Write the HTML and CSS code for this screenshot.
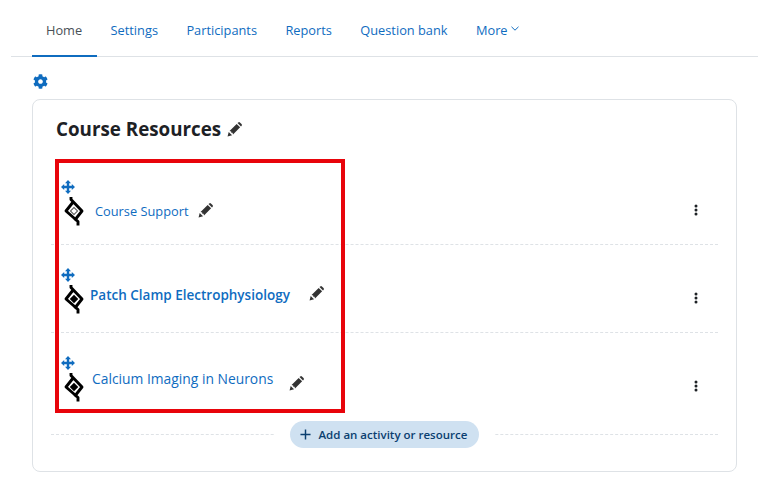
FILE: index.html
```html
<!DOCTYPE html>
<html lang="en">
<head>
<meta charset="utf-8">
<title>Course Resources</title>
<link rel="stylesheet" href="styles.css">
</head>
<body>
<svg class="defs" width="0" height="0" aria-hidden="true">
  <defs>
    <symbol id="pencil" viewBox="0 0 16 16">
      <path d="M0.6 15.4 1.8 10.6 5.4 14.2Z"/>
      <path d="M2.7 9.6 10.3 2 14 5.7 6.4 13.3 5.9 11.5 4.500 11.500 4.500 10.100Z"/>
      <path d="M11.200 1.100 12 .4Q13 -.2 13.800 .5L15.500 2.200Q16.200 3 15.600 4L14.900 4.800Z"/>
    </symbol>
    <symbol id="move" viewBox="0 0 14 14">
      <path d="M7 0 10 3.200H8.200V5.800H10.800V4L14 7 10.800 10V8.200H8.200V10.800H10L7 14 4 10.800H5.800V8.200H3.200V10L0 7 3.200 4V5.800H5.800V3.200H4Z"/>
    </symbol>
    <symbol id="strand" viewBox="0 0 20 30">
      <path d="M7 1V3.500L18 15 10.500 24.500M14 29.500V25.500L2 15 9.500 5.500" fill="none" stroke="#000" stroke-width="2.900" stroke-linejoin="round"/>
    </symbol>
    <symbol id="kebab" viewBox="0 0 4 12">
      <circle cx="2" cy="2" r="1.500"/>
      <circle cx="2" cy="6" r="1.500"/>
      <circle cx="2" cy="10" r="1.500"/>
    </symbol>
  </defs>
</svg>

<nav class="tabs">
  <a class="tab tab-active" href="#">Home</a>
  <a class="tab" href="#">Settings</a>
  <a class="tab" href="#">Participants</a>
  <a class="tab" href="#">Reports</a>
  <a class="tab" href="#">Question bank</a>
  <a class="tab" href="#">More
    <svg class="chevron" viewBox="0 0 8 5" width="8" height="5"><path d="M.5.800 4 4.200 7.500.800" fill="none" stroke="currentColor"/></svg>
  </a>
</nav>

<main class="page">
  <svg class="gear" viewBox="0 0 512 512" width="15" height="15"><path d="M487.400 315.700l-42.600-24.600c4.300-23.200 4.300-47 0-70.200l42.600-24.600c4.900-2.800 7.100-8.600 5.500-14-11.100-35.600-30-67.800-54.700-94.600-3.800-4.100-10-5.100-14.800-2.300L380.800 110c-17.900-15.400-38.500-27.300-60.800-35.100V25.800c0-5.600-3.900-10.500-9.400-11.700-36.700-8.200-74.300-7.800-109.200 0-5.500 1.200-9.400 6.100-9.400 11.700V75c-22.200 7.900-42.800 19.800-60.800 35.100L88.700 85.500c-4.900-2.800-11-1.900-14.800 2.300-24.700 26.700-43.600 58.900-54.700 94.600-1.700 5.400.6 11.200 5.500 14L67.300 221c-4.300 23.200-4.300 47 0 70.200l-42.600 24.600c-4.900 2.800-7.100 8.600-5.500 14 11.100 35.600 30 67.800 54.700 94.600 3.800 4.100 10 5.100 14.800 2.300l42.600-24.600c17.900 15.400 38.500 27.300 60.800 35.100v49.200c0 5.600 3.900 10.500 9.400 11.700 36.700 8.200 74.300 7.800 109.200 0 5.500-1.200 9.400-6.100 9.400-11.700v-49.200c22.200-7.900 42.800-19.800 60.800-35.100l42.600 24.600c4.900 2.800 11 1.900 14.800-2.300 24.700-26.700 43.600-58.900 54.700-94.600 1.500-5.500-.7-11.300-5.600-14.100zM256 336c-44.100 0-80-35.900-80-80s35.900-80 80-80 80 35.900 80 80-35.900 80-80 80z"/></svg>

  <section class="card">
    <h2 class="section-title">Course Resources
      <svg class="pencil pencil-title" width="15" height="15"><use href="#pencil"/></svg>
    </h2>

    <ul class="activities">
      <li class="activity activity-one">
        <div class="activity-main">
          <svg class="move" width="14" height="14"><use href="#move"/></svg>
          <div class="activity-line">
            <span class="strand-wrap">
              <svg class="strand" width="20" height="30"><use href="#strand"/></svg>
              <span class="strand-core strand-core-hollow"></span>
            </span>
            <a class="activity-link" href="#">Course Support</a>
            <svg class="pencil" width="15" height="15"><use href="#pencil"/></svg>
          </div>
        </div>
        <svg class="kebab" width="4" height="12"><use href="#kebab"/></svg>
      </li>
      <li class="activity activity-two">
        <div class="activity-main">
          <svg class="move" width="14" height="14"><use href="#move"/></svg>
          <div class="activity-line">
            <span class="strand-wrap">
              <svg class="strand" width="20" height="30"><use href="#strand"/></svg>
              <span class="strand-core"></span>
            </span>
            <a class="activity-link" href="#">Patch Clamp Electrophysiology</a>
            <svg class="pencil" width="15" height="15"><use href="#pencil"/></svg>
          </div>
        </div>
        <svg class="kebab" width="4" height="12"><use href="#kebab"/></svg>
      </li>
      <li class="activity activity-three">
        <div class="activity-main">
          <svg class="move" width="14" height="14"><use href="#move"/></svg>
          <div class="activity-line">
            <span class="strand-wrap">
              <svg class="strand" width="20" height="30"><use href="#strand"/></svg>
              <span class="strand-core"></span>
            </span>
            <a class="activity-link" href="#">Calcium Imaging in Neurons</a>
            <svg class="pencil" width="15" height="15"><use href="#pencil"/></svg>
          </div>
        </div>
        <svg class="kebab" width="4" height="12"><use href="#kebab"/></svg>
      </li>
    </ul>

    <div class="add-row">
      <button class="add-button" type="button">
        <svg class="plus" viewBox="0 0 12 12" width="11" height="11"><path d="M6 .5V11.500M.5 6H11.500" fill="none" stroke="currentColor" stroke-width="1.600"/></svg>
        Add an activity or resource
      </button>
    </div>

    <div class="highlight" aria-hidden="true"></div>
  </section>
</main>
</body>
</html>
```
FILE: styles.css
```css
* { box-sizing: border-box; }

html, body { margin: 0; padding: 0; }

body {
  width: 775px;
  height: 484px;
  overflow: hidden;
  background: #fff;
  color: #1d2125;
  font-family: "Open Sans", "Noto Sans", sans-serif;
  font-size: 12.8px;
}

.defs { position: absolute; }

a { color: #0f6cbf; text-decoration: none; }

.tabs {
  display: flex;
  height: 57px;
  margin: 0 17px 0 11px;
  padding-left: 20.8px;
  border-bottom: 1px solid #dee2e6;
}

.tab {
  display: flex;
  align-items: center;
  gap: 3px;
  height: 57px;
  padding: 2px 14.2px 0;
  white-space: nowrap;
}

.tab-active {
  color: #495057;
  padding: 4px 14.8px 0 14.2px;
  margin-right: -0.6px;
  border-bottom: 2px solid #0f6cbf;
}

.chevron { margin-bottom: 3px; }

.page {
  padding: 17px 38px 0 32px;
}

.gear {
  display: block;
  fill: #0f6cbf;
  margin-left: 1px;
  height: 15px;
}

.card {
  position: relative;
  height: 373px;
  margin-top: 10px;
  padding: 15px 18px 0;
  border: 1px solid #dee2e6;
  border-radius: 8px;
}

.section-title {
  display: flex;
  align-items: center;
  gap: 6px;
  margin: 0 0 0 5px;
  height: 28px;
  font-size: 18.800px;
  font-weight: 700;
  color: #1d2125;
}

.pencil { fill: #333; flex: none; }
.pencil-title { margin-top: 1px; }

.activities {
  list-style: none;
  margin: 14px 0 0;
  padding: 0;
}

.activity {
  display: flex;
  justify-content: space-between;
  height: 88px;
  border-bottom: 1px dashed #dee2e6;
}

.activity-three { border-bottom: 0; }

.activity-main {
  display: flex;
  flex-direction: column;
  padding: 23px 0 0 10px;
}

.move { display: block; fill: #0f6cbf; }

.kebab {
  fill: #1d2125;
  margin: 47px 20px 0 0;
}

.activity-line {
  display: flex;
  align-items: flex-start;
  margin-top: 2px;
}

.strand-wrap {
  position: relative;
  display: block;
  width: 20px;
  height: 30px;
  margin-left: 3px;
  flex: none;
}

.strand { display: block; }

.strand-core {
  position: absolute;
  left: 7px;
  top: 12px;
  width: 6px;
  height: 6px;
  background: #000;
  transform: rotate(45deg);
}

.strand-core-hollow {
  background: #fff;
  border: 1px solid #555;
}

.activity-one .activity-link { margin: 6px 10px 0 11px; }
.activity-one .pencil { margin-top: 7px; }

.activity-two .activity-link {
  margin: 2px 19px 0 6px;
  font-size: 13.500px;
  font-weight: 600;
}
.activity-two .pencil { margin-top: 2px; }

.activity-three .activity-link {
  margin: -3px 16px 0 8px;
  font-size: 13.850px;
}
.activity-three .pencil { margin-top: 4px; }

.add-row {
  position: relative;
  display: flex;
  justify-content: center;
  align-items: center;
  height: 27px;
  padding-right: 1px;
}

.add-row::before {
  content: "";
  position: absolute;
  left: 0;
  right: 0;
  top: 13px;
  border-top: 1px dashed #dee2e6;
}

.add-button {
  position: relative;
  display: flex;
  align-items: center;
  gap: 8px;
  width: 189px;
  height: 27px;
  padding: 0 0 0 10px;
  border: 0;
  box-shadow: 0 0 0 15px #fff;
  border-radius: 14px;
  background: #cfe1f1;
  color: #0a3f70;
  font-family: inherit;
  font-size: 11.500px;
  font-weight: 600;
  white-space: nowrap;
}

.plus { flex: none; }

.highlight {
  position: absolute;
  left: 22px;
  top: 59px;
  width: 290px;
  height: 254px;
  border: 4px solid #e8040b;
}
```
